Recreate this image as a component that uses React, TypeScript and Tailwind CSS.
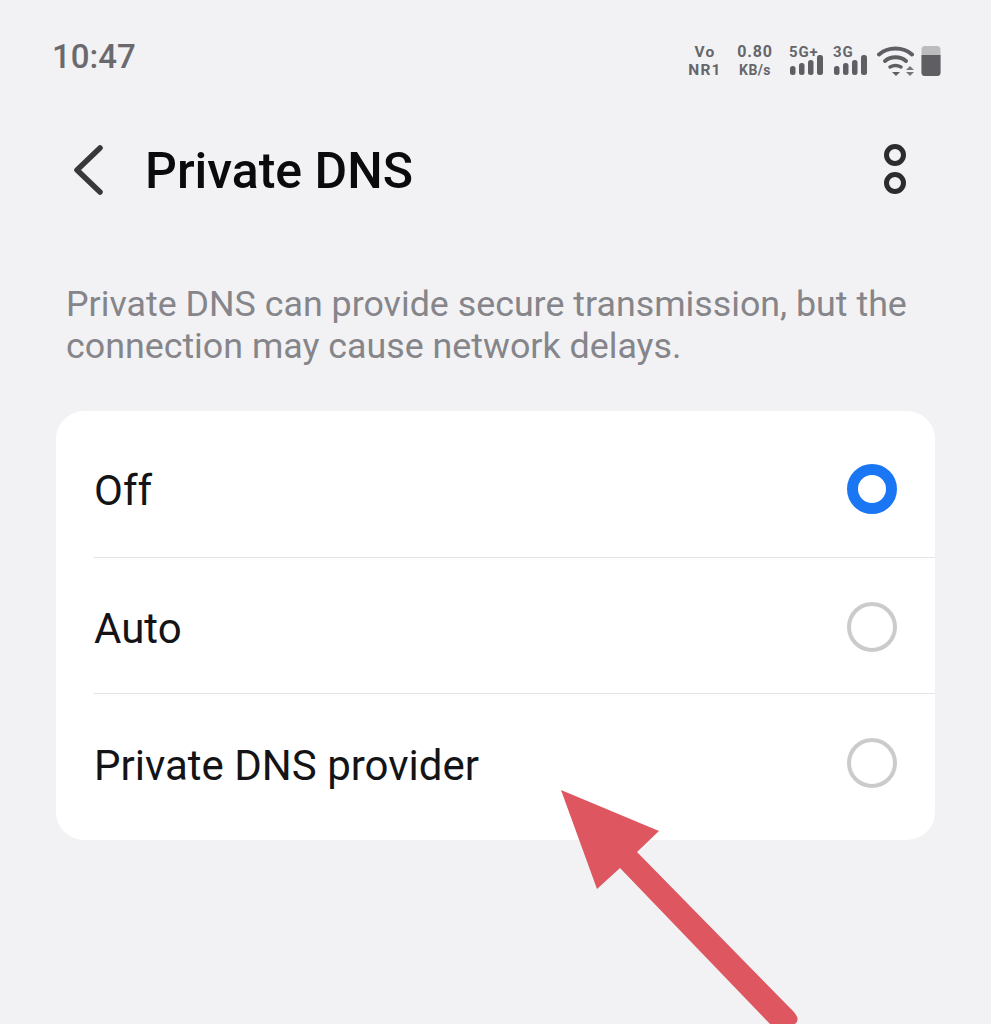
const font = "font-['Roboto',sans-serif]";

function Bars({ label, ml }: { label: string; ml?: string }) {
  return (
    <div className={`relative w-[36px] h-[30px] ${ml ?? ""}`}>
      <span className="absolute left-0 top-[-2px] text-[15px] leading-[16px] font-bold tracking-[0.8px] text-[#66666a]">{label}</span>
      <svg className="absolute left-0 top-0" width="36" height="30" viewBox="0 0 36 30" fill="#5f5f63">
        <rect x="1" y="20" width="5.500" height="9" rx="2.5" />
        <rect x="10" y="17" width="5.500" height="12" rx="2.5" />
        <rect x="19" y="14" width="5.500" height="15" rx="2.5" />
        <rect x="28" y="9" width="6" height="20" rx="2.5" />
      </svg>
    </div>
  );
}

function Radio({ checked }: { checked?: boolean }) {
  return (
    <span
      className={
        checked
          ? "block w-[50px] h-[50px] rounded-full border-[11px] border-[#1a76f2] bg-white"
          : "block w-[50px] h-[50px] rounded-full border-[4px] border-[#cbcbcb] bg-white"
      }
    />
  );
}

function Row({ label, checked, className, labelClass }: { label: string; checked?: boolean; className: string; labelClass: string }) {
  return (
    <div className={`ml-[38px] pr-[38px] flex items-center justify-between ${className}`}>
      <span className={`text-[42px] leading-none text-[#141416] ${labelClass}`}>{label}</span>
      <Radio checked={checked} />
    </div>
  );
}

export default function App() {
  return (
    <div className={`relative w-[991px] h-[1024px] overflow-hidden bg-[#f2f2f5] ${font}`}>
      {/* status bar */}
      <div className="h-[115px] pl-[52px] pr-[50px] pt-[36px] flex items-start justify-between">
        <span className="text-[33px] leading-[42px] font-medium text-[#6a6a6e]">10:47</span>
        <div className="flex items-center mt-[7px] text-[#66666a]">
          <div className="w-[34px] flex flex-col items-center text-[15.500px] leading-[18px] font-bold tracking-[1.2px]">
            <span>Vo</span>
            <span>NR1</span>
          </div>
          <div className="w-[36px] ml-[15px] flex flex-col items-center leading-[18px] font-bold">
            <span className="text-[16px] tracking-[0.8px]">0.80</span>
            <span className="text-[14px] tracking-[0.4px]">KB/s</span>
          </div>
          <Bars label="5G+" ml="ml-[16px]" />
          <Bars label="3G" ml="ml-[8px]" />
          <svg className="ml-[8px]" width="38" height="32" viewBox="0 0 38 32" fill="none">
            <path d="M2 9.5C11 1.5 26 1.5 35 9.5" stroke="#5f5f63" strokeWidth="4" strokeLinecap="round" />
            <path d="M8 16C14 11 23 11 29 16" stroke="#5f5f63" strokeWidth="4" strokeLinecap="round" />
            <path d="M13 22C16.500 20 20.500 20 24 22" stroke="#5f5f63" strokeWidth="3.500" strokeLinecap="round" />
            <path d="M15 27H23L19 31Z" fill="#5f5f63" />
            <path d="M33 21L37 25H29Z M29 27H37L33 31Z" fill="#77777b" />
          </svg>
          <svg className="ml-[6px]" width="20" height="32" viewBox="0 0 20 32">
            <rect x="0.500" y="1" width="19" height="30" rx="3.500" fill="#bcbcbe" />
            <path d="M0.500 10H19.500V27.500A3.500 3.500 0 0 1 16 31H4A3.500 3.500 0 0 1 0.500 27.500Z" fill="#5f5f63" />
          </svg>
        </div>
      </div>

      {/* action bar */}
      <div className="h-[110px] pl-[72px] pr-[85px] flex items-center justify-between">
        <div className="flex items-center">
          <svg width="32" height="50" viewBox="0 0 32 50" fill="none">
            <path d="M28 3L5 25L28 47" stroke="#38383b" strokeWidth="5.500" strokeLinecap="round" strokeLinejoin="round" />
          </svg>
          <h1 className="ml-[41px] mt-[2px] text-[50px] leading-none font-medium text-[#0b0b0d]">Private DNS</h1>
        </div>
        <div className="flex flex-col gap-[6px] -mt-[2px]">
          <span className="block w-[22px] h-[22px] rounded-full border-[5px] border-[#2c2c2e]" />
          <span className="block w-[22px] h-[22px] rounded-full border-[5px] border-[#2c2c2e]" />
        </div>
      </div>

      {/* description */}
      <p className="mt-[58px] ml-[66px] w-[880px] text-[35.800px] leading-[42px] text-[#85858a]">
        Private DNS can provide secure transmission, but the connection may cause network delays.
      </p>

      {/* options */}
      <div className="mt-[44px] mx-[56px] bg-white rounded-[28px] overflow-hidden">
        <Row label="Off" checked className="h-[147px] pt-[9px] border-b border-[#e4e4e6]" labelClass="mt-[4px]" />
        <Row label="Auto" className="h-[136px] pt-[2px] border-b border-[#e4e4e6]" labelClass="mt-[4px]" />
        <Row label="Private DNS provider" className="h-[146px] pb-[9px]" labelClass="mt-[6px]" />
      </div>

      {/* annotation arrow */}
      <svg className="absolute left-0 top-0" width="991" height="1024" viewBox="0 0 991 1024">
        <path
          d="M561 790L659 831L637 852L790 1008Q802 1019 795 1024L770 1024L620 868L597 889Z"
          fill="#dd5660"
        />
      </svg>
    </div>
  );
}
